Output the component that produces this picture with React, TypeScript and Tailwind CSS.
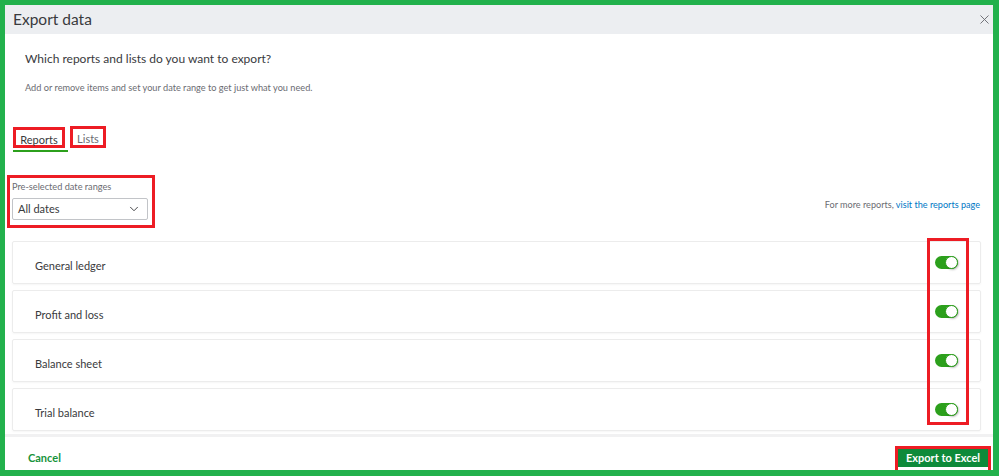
import React, { useState } from 'react';
import { X, ChevronDown } from 'lucide-react';

const reports = ['General ledger', 'Profit and loss', 'Balance sheet', 'Trial balance'];

function Toggle({ on, onClick }: { on: boolean; onClick: () => void }) {
  return (
    <button
      type="button"
      onClick={onClick}
      className={`relative w-[23px] h-[13px] rounded-full ${on ? 'bg-[#2ca01c]' : 'bg-[#babec5]'}`}
    >
      <span
        className={`absolute top-0 w-[13px] h-[13px] rounded-full bg-white border border-[#2ca01c] shadow-[1px_1px_2px_rgba(0,0,0,0.25)] ${
          on ? 'right-0' : 'left-0'
        }`}
      />
    </button>
  );
}

export default function App() {
  const [enabled, setEnabled] = useState([true, true, true, true]);

  return (
    <div className="w-[999px] h-[476px] flex flex-col bg-white border-[#22b14c] border-t-[5px] border-l-[5px] border-r-[6px] border-b-[6px] font-['Lato',sans-serif] text-[#393a3d] overflow-hidden">
      {/* Header */}
      <div className="h-[29px] shrink-0 bg-[#eceef1] flex items-center justify-between pl-[8px] pr-[1px]">
        <span className="text-[15.5px] leading-none">Export data</span>
        <X size={15} strokeWidth={1.5} className="text-[#6b6c72]" />
      </div>

      {/* Body */}
      <div className="flex-1 min-h-0 overflow-hidden flex flex-col pl-[2px] pr-[12px]">
        <div className="pl-[18px] pt-[16px] text-[12px] leading-[18px]">
          Which reports and lists do you want to export?
        </div>
        <div className="pl-[18px] mt-[12px] text-[9.2px] leading-[16px] text-[#6b6c72]">
          Add or remove items and set your date range to get just what you need.
        </div>

        {/* Tabs */}
        <div className="flex items-start ml-[6px] mt-[31px]">
          <div className="relative w-[52px] h-[21px] border-[3px] border-[#ed1c24] flex items-end justify-center text-[11px] leading-none">
            Reports
            <span className="absolute -left-[3px] -bottom-[7px] w-[55px] h-[2px] bg-[#2ca01c]" />
          </div>
          <div className="ml-[5px] -mt-[1px] w-[36px] h-[22px] border-[3px] border-[#ed1c24] flex items-end justify-center pb-[1px] text-[11px] leading-none text-[#6b6c72]">
            Lists
          </div>
        </div>

        {/* Date range + link */}
        <div className="flex items-end justify-between mt-[27px]">
          <div className="w-[148px] h-[53px] border-[3px] border-[#ed1c24] pl-[2px] pt-[3px]">
            <div className="text-[9.2px] leading-[12px] text-[#6b6c72]">Pre-selected date ranges</div>
            <div className="mt-[5px] w-[136px] h-[22px] border border-[#c2c4c8] rounded-[2px] flex items-center justify-between pl-[5px] pr-[6px] text-[11px]">
              All dates
              <ChevronDown size={14} strokeWidth={1.6} className="text-[#393a3d]" />
            </div>
          </div>
          <div className="mb-[16px] pr-[1px] text-[9.1px] text-[#6b6c72]">
            For more reports, <span className="text-[#0077c5]">visit the reports page</span>
          </div>
        </div>

        {/* Report rows */}
        <div className="relative ml-[5px] mt-[13px] flex flex-col gap-[6px]">
          {reports.map((name, i) => (
            <div
              key={name}
              className="h-[43px] shrink-0 flex items-center justify-between border border-[#ececec] rounded-[2px] pl-[22px] pr-[22px] shadow-[0_1px_2px_rgba(0,0,0,0.04)] text-[11px]"
            >
              <span className="pt-[7px]">{name}</span>
              <Toggle
                on={enabled[i]}
                onClick={() => setEnabled((v) => v.map((x, j) => (j === i ? !x : x)))}
              />
            </div>
          ))}
          {/* annotation box around toggles */}
          <div className="absolute right-[12px] -top-[3px] w-[42px] h-[187px] border-[3px] border-[#ed1c24] pointer-events-none" />
        </div>
      </div>

      {/* Footer */}
      <div className="h-[36px] shrink-0 border-t-[3px] border-[#f1f1f2] flex items-center justify-between pl-[23px] pr-[2px]">
        <span className="text-[11px] font-bold text-[#17933b] mt-[9px]">Cancel</span>
        <div className="self-end border-[3px] border-[#ed1c24] border-b-0 pb-[3px]">
          <button type="button" className="w-[90px] h-[18px] bg-[#0e8a3a] text-white text-[11px] font-bold flex items-center justify-center">
            Export to Excel
          </button>
        </div>
      </div>
    </div>
  );
}
